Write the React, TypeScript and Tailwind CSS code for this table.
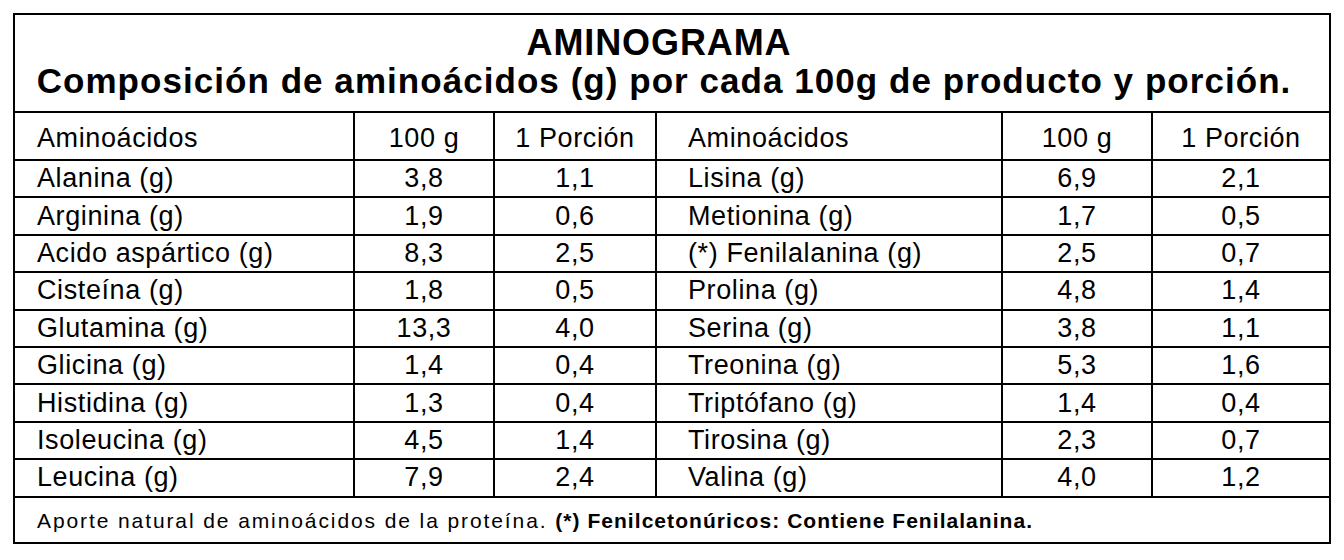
import React from "react";

const left = [
  ["Alanina (g)", "3,8", "1,1"],
  ["Arginina (g)", "1,9", "0,6"],
  ["Acido aspártico (g)", "8,3", "2,5"],
  ["Cisteína (g)", "1,8", "0,5"],
  ["Glutamina (g)", "13,3", "4,0"],
  ["Glicina (g)", "1,4", "0,4"],
  ["Histidina (g)", "1,3", "0,4"],
  ["Isoleucina (g)", "4,5", "1,4"],
  ["Leucina (g)", "7,9", "2,4"],
];
const right = [
  ["Lisina (g)", "6,9", "2,1"],
  ["Metionina (g)", "1,7", "0,5"],
  ["(*) Fenilalanina (g)", "2,5", "0,7"],
  ["Prolina (g)", "4,8", "1,4"],
  ["Serina (g)", "3,8", "1,1"],
  ["Treonina (g)", "5,3", "1,6"],
  ["Triptófano (g)", "1,4", "0,4"],
  ["Tirosina (g)", "2,3", "0,7"],
  ["Valina (g)", "4,0", "1,2"],
];

const cols = "grid grid-cols-[340px_140px_162px_346px_150px_1fr]";

function Row({ cells, h, pad }: { cells: string[]; h: string; pad?: string }) {
  return (
    <div className={`${cols} ${h} border-b-2 border-black`}>
      {cells.map((c, i) => (
        <div
          key={i}
          className={`flex items-center ${pad ?? ""} ${
            i === 0 ? "justify-start pl-[22px]" : i === 3 ? "justify-start pl-[31px]" : "justify-center"
          } ${i < 5 ? "border-r-2 border-black" : ""}`}
        >
          {c}
        </div>
      ))}
    </div>
  );
}

export default function App() {
  return (
    <div
      className="w-[1344px] h-[560px] bg-white pt-[13px] pl-[13px]"
      style={{ fontFamily: '"Liberation Sans", Arial, sans-serif' }}
    >
      <div className="w-[1318px] border-2 border-black text-black text-[27px] tracking-[0.6px] leading-none">
        <div className="h-[98px] border-b-2 border-black flex flex-col items-center pt-[10px]">
          <div className="font-bold text-[36px] leading-[36px] tracking-[0.9px] pr-[26px]">AMINOGRAMA</div>
          <div className="font-bold text-[35px] leading-[35px] mt-[2px] tracking-[1.05px] pr-[16px]">
            Composición de aminoácidos (g) por cada 100g de producto y porción.
          </div>
        </div>
        <Row
          cells={["Aminoácidos", "100 g", "1 Porción", "Aminoácidos", "100 g", "1 Porción"]}
          h="h-[48px]"
          pad="pt-[5px]"
        />
        {left.map((l, i) => (
          <Row key={i} cells={[...l, ...right[i]]} h="h-[37.4px]" />
        ))}
        <div className="h-[44px] flex items-center pl-[22px] text-[21px] pt-[1px]">
          <span className="tracking-[1.9px]">Aporte natural de aminoácidos de la proteína.&nbsp;</span>
          <span className="font-bold tracking-[1.05px]">(*) Fenilcetonúricos: Contiene Fenilalanina.</span>
        </div>
      </div>
    </div>
  );
}
